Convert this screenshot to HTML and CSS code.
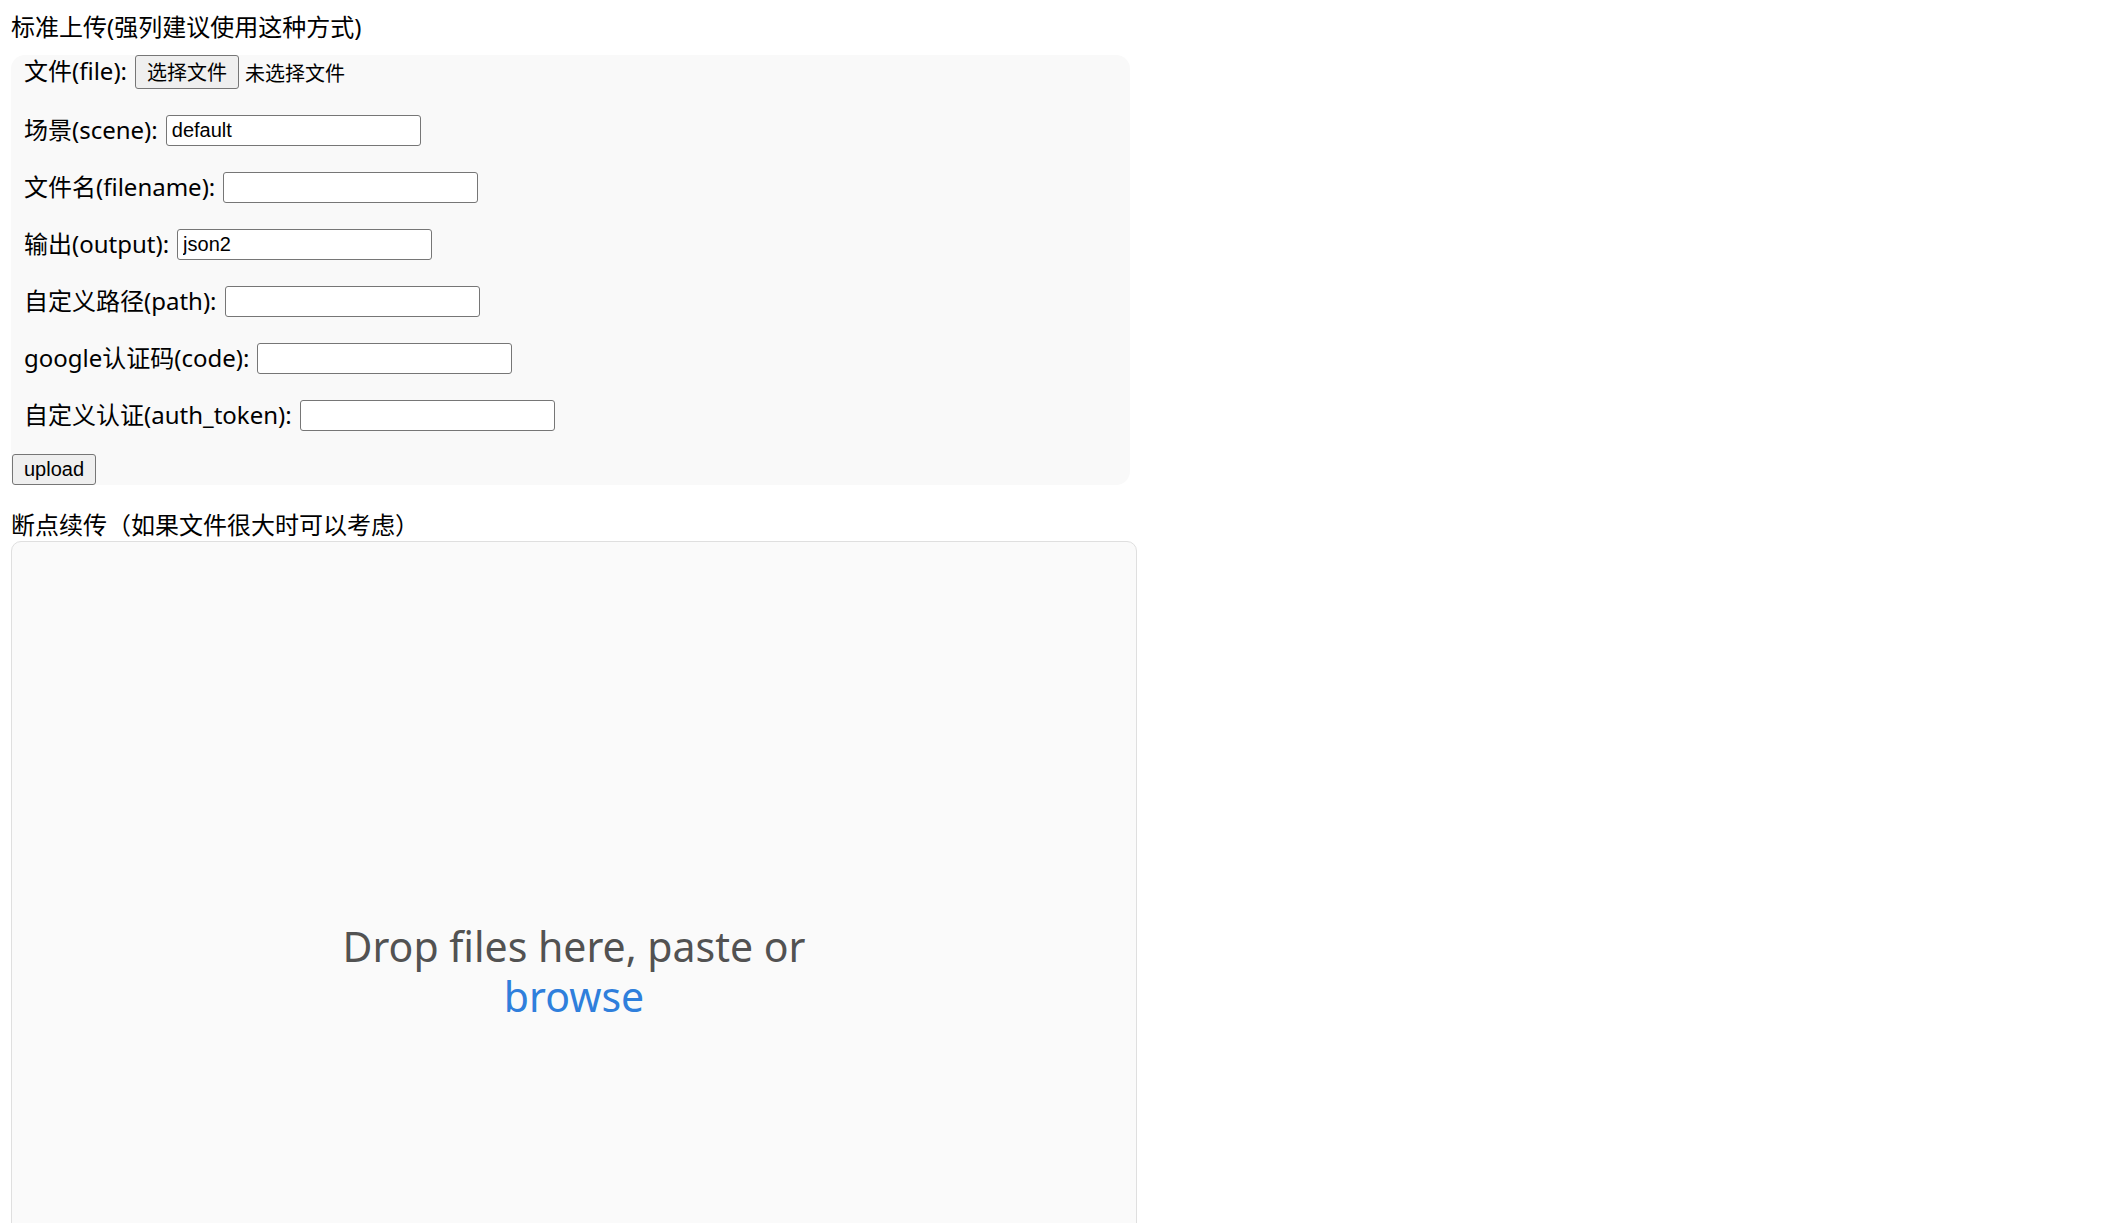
FILE: index.html
```html
<!DOCTYPE html>
<html lang="zh-CN">
<head>
<meta charset="utf-8">
<title>upload</title>
<link rel="stylesheet" href="styles.css">
</head>
<body>
<div class="title first">标准上传(强列建议使用这种方式)</div>
<form class="panel">
  <div class="row file-row">
    <span class="label">文件(file):</span>
    <span class="file-btn">选择文件</span>
    <span class="file-none">未选择文件</span>
  </div>
  <div class="row"><span class="label">场景(scene):</span><input class="field" type="text" value="default"></div>
  <div class="row"><span class="label">文件名(filename):</span><input class="field" type="text" value=""></div>
  <div class="row"><span class="label">输出(output):</span><input class="field" type="text" value="json2"></div>
  <div class="row"><span class="label">自定义路径(path):</span><input class="field" type="text" value=""></div>
  <div class="row"><span class="label">google认证码(code):</span><input class="field" type="text" value=""></div>
  <div class="row"><span class="label">自定义认证(auth_token):</span><input class="field" type="text" value=""></div>
  <div class="submit-row"><button type="button" class="upload-btn">upload</button></div>
</form>
<div class="title second">断点续传（如果文件很大时可以考虑）</div>
<div class="dashboard">
  <div class="drop-text"><div class="drop-line">Drop files here, paste or</div><div class="drop-line browse">browse</div></div>
</div>
</body>
</html>
```
FILE: styles.css
```css
html, body {
  margin: 0;
  padding: 0;
  background: #ffffff;
}
body {
  padding: 11px 0 0 11px;
  font-family: "Noto Sans", "Noto Sans CJK SC", sans-serif;
  font-size: 24px;
  color: #000;
}
.title {
  font-size: 24px;
  line-height: 32px;
  white-space: nowrap;
}
.title.first {
  margin-top: 0;
  margin-bottom: 12px;
}
.title.second {
  margin-top: 24px;
  margin-bottom: 0;
}
.panel {
  width: 1119px;
  background: #f9f9f9;
  border-radius: 14px;
  display: flex;
  flex-direction: column;
  gap: 26px;
  margin: 0;
}
.row {
  display: flex;
  align-items: center;
  height: 31px;
  padding-left: 13px;
  white-space: nowrap;
}
.row.file-row {
  height: 34px;
}
.label {
  margin-right: 8px;
  padding-bottom: 3px;
  font-size: 24px;
  line-height: 31px;
}
.file-btn {
  box-sizing: border-box;
  height: 34px;
  width: 104px;
  border: 1px solid #767676;
  border-radius: 3px;
  background: #efefef;
  font-family: "Noto Sans CJK SC", sans-serif;
  font-size: 20px;
  line-height: 32px;
  text-align: center;
  color: #000;
}
.file-none {
  margin-left: 6px;
  font-family: "Noto Sans CJK SC", sans-serif;
  font-size: 20px;
}
.field {
  box-sizing: border-box;
  width: 255px;
  height: 31px;
  margin: 0;
  padding: 1px 5px;
  border: 1px solid #767676;
  border-radius: 3px;
  background: #fff;
  font-family: "Liberation Sans", Arial, sans-serif;
  font-size: 20px;
  color: #000;
}
.submit-row {
  display: flex;
  margin-top: -3px;
}
.upload-btn {
  box-sizing: border-box;
  width: 84px;
  height: 31px;
  margin: 0 0 0 1px;
  padding: 0;
  border: 1px solid #767676;
  border-radius: 3px;
  background: #efefef;
  font-family: "Liberation Sans", Arial, sans-serif;
  font-size: 20px;
  color: #000;
}
.dashboard {
  box-sizing: border-box;
  width: 1126px;
  height: 866px;
  border: 1px solid #dfdfdf;
  border-radius: 10px;
  background: #fafafa;
  display: flex;
  align-items: center;
  justify-content: center;
}
.drop-text {
  margin-top: -6px;
  display: flex;
  flex-direction: column;
  align-items: center;
  font-family: "Noto Sans", sans-serif;
  font-size: 41px;
  color: #525252;
}
.drop-line {
  height: 50px;
  line-height: 50px;
}
.browse {
  color: #2f7fdc;
}
```
